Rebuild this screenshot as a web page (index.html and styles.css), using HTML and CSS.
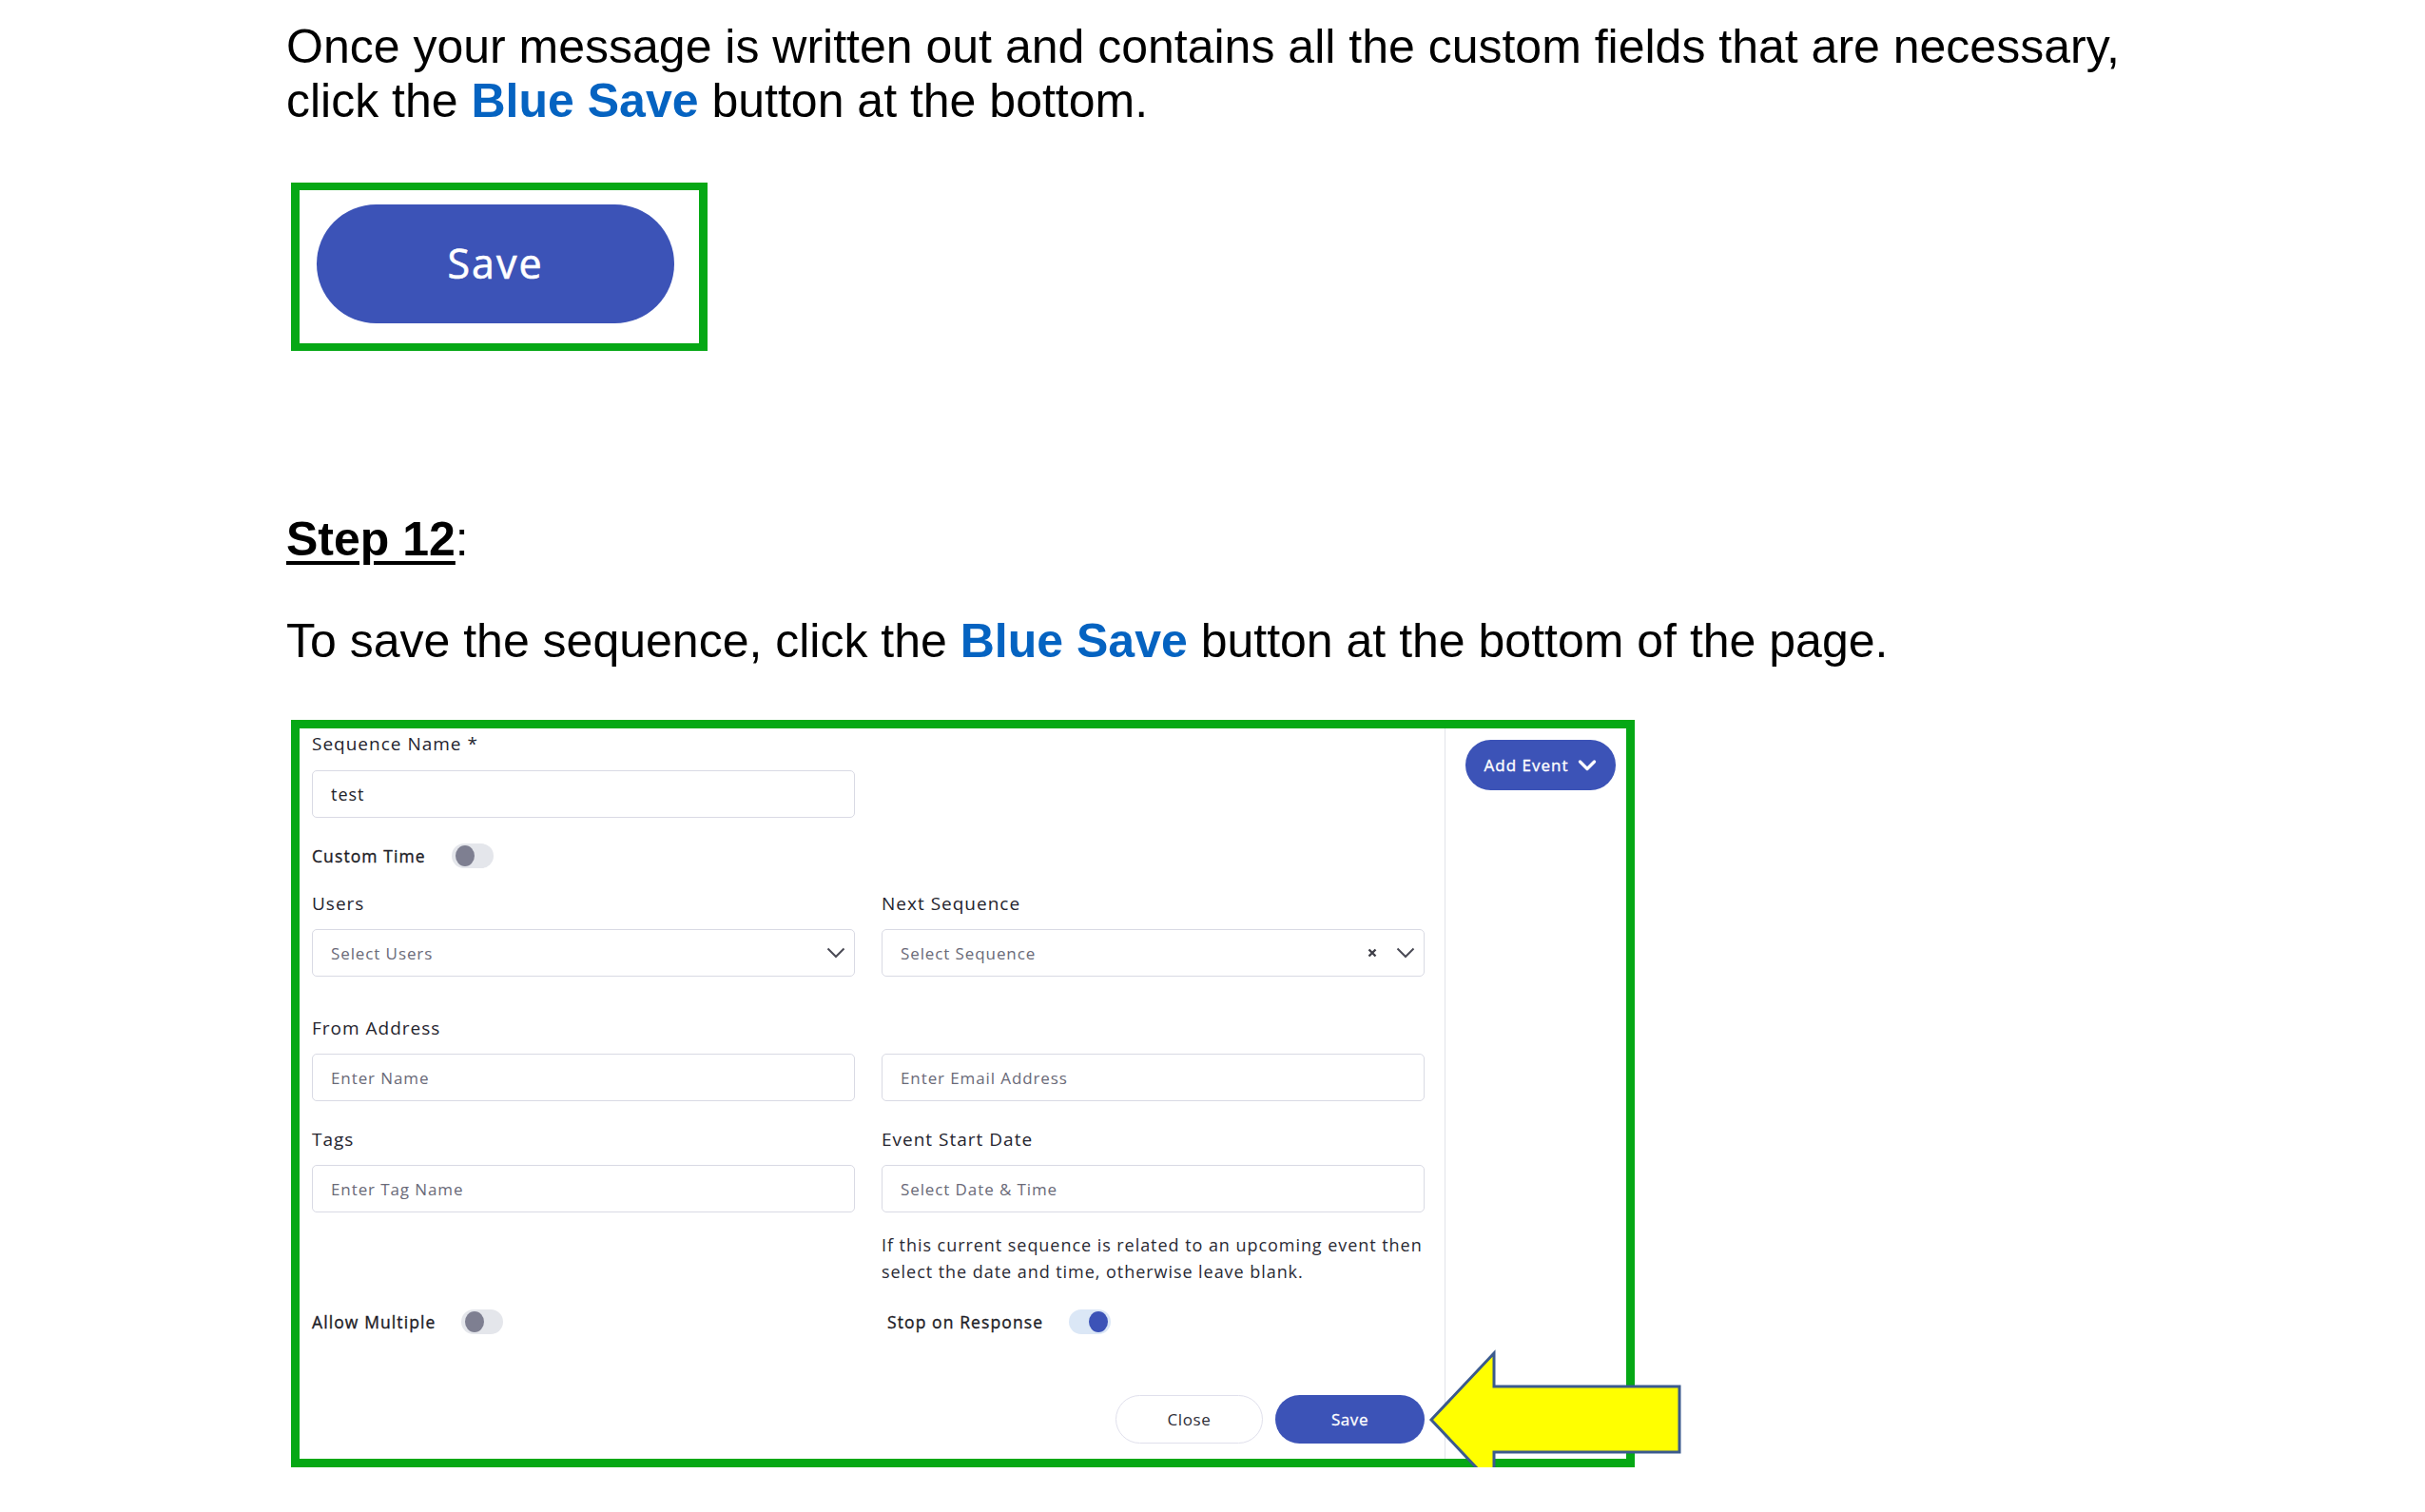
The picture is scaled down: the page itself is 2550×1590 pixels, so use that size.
FILE: index.html
```html
<!DOCTYPE html>
<html lang="en">
<head>
<meta charset="utf-8">
<title>Step 12</title>
<link rel="stylesheet" href="styles.css">
</head>
<body>
<main class="doc">
  <p class="para para-first">Once your message is written out and contains all the custom fields that are necessary,<br>click the <b class="hl">Blue Save</b> button at the bottom.</p>

  <div class="frame frame-save"><div class="big-save">Save</div></div>

  <p class="para step"><span class="step-title">Step 12</span>:</p>

  <p class="para para-save">To save the sequence, click the <b class="hl">Blue Save</b> button at the bottom of the page.</p>

  <div class="frame panel">
    <div class="form">
      <div class="label">Sequence Name *</div>
      <div class="input input-name"><span class="value">test</span></div>

      <div class="switch-row custom-time">
        <span class="switch-label">Custom Time</span>
        <span class="toggle"><span class="knob"></span></span>
      </div>

      <div class="grid g-users">
        <div class="label">Users</div>
        <div class="label">Next Sequence</div>
        <div class="input select select-users">
          <span class="ph">Select Users</span>
          <svg class="chev" width="20" height="12" viewBox="0 0 20 12"><path d="M1.5 1.5 L10 10 L18.5 1.5" fill="none" stroke="#4a4a55" stroke-width="2"/></svg>
        </div>
        <div class="input select select-seq">
          <span class="ph">Select Sequence</span>
          <span class="sel-icons">
            <svg class="clear" width="10" height="10" viewBox="0 0 10 10"><path d="M1.5 1.5 L8.5 8.5 M8.5 1.5 L1.5 8.5" fill="none" stroke="#3f3f48" stroke-width="2.4"/></svg>
            <svg class="chev" width="20" height="12" viewBox="0 0 20 12"><path d="M1.5 1.5 L10 10 L18.5 1.5" fill="none" stroke="#4a4a55" stroke-width="2"/></svg>
          </span>
        </div>
      </div>

      <div class="grid g-from">
        <div class="label">From Address</div>
        <div></div>
        <div class="input"><span class="ph">Enter Name</span></div>
        <div class="input"><span class="ph">Enter Email Address</span></div>
      </div>

      <div class="grid g-tags">
        <div class="label">Tags</div>
        <div class="label">Event Start Date</div>
        <div class="input"><span class="ph">Enter Tag Name</span></div>
        <div class="input"><span class="ph">Select Date &amp; Time</span></div>
        <div></div>
        <p class="help">If this current sequence is related to an upcoming event then<br>select the date and time, otherwise leave blank.</p>
      </div>

      <div class="grid g-switches">
        <div class="switch-row">
          <span class="switch-label">Allow Multiple</span>
          <span class="toggle"><span class="knob"></span></span>
        </div>
        <div class="switch-row stop">
          <span class="switch-label">Stop on Response</span>
          <span class="toggle on"><span class="knob"></span></span>
        </div>
      </div>

      <div class="actions">
        <button class="btn btn-close" type="button">Close</button>
        <button class="btn btn-save" type="button">Save</button>
      </div>
    </div>

    <div class="side">
      <button class="add-event" type="button">Add Event
        <svg width="20" height="12" viewBox="0 0 20 12"><path d="M2.5 2 L10 9.5 L17.5 2" fill="none" stroke="#ffffff" stroke-width="3.2" stroke-linecap="round" stroke-linejoin="round"/></svg>
      </button>
    </div>

    <svg class="arrow" width="272" height="150" viewBox="0 0 272 150">
      <polygon points="5,75 71,5 71,40 266,40 266,109 71,109 71,145" fill="#ffff00" stroke="#3b5a8e" stroke-width="3" stroke-linejoin="miter"/>
    </svg>
  </div>
</main>
</body>
</html>
```

FILE: styles.css
```css
html, body {
  margin: 0;
  padding: 0;
  background: #ffffff;
}

body {
  font-family: "Liberation Sans", Arial, sans-serif;
  color: #000000;
}

.doc {
  padding: 21px 0 0 301px;
}

.para {
  margin: 0;
  font-size: 50px;
  line-height: 57px;
}

.hl {
  color: #0563c1;
  font-weight: bold;
}

.frame {
  border: 9px solid #06a815;
  box-sizing: border-box;
  margin-left: 5px;
}

.frame-save {
  margin-top: 57px;
  width: 438px;
  height: 177px;
  border-width: 8px 9px;
  padding: 15px 0 0 18px;
}

.big-save {
  width: 376px;
  height: 125px;
  border-radius: 63px;
  background: #3c53b7;
  color: #ffffff;
  font-family: "Open Sans", "Noto Sans", sans-serif;
  font-size: 43px;
  letter-spacing: 2px;
  -webkit-text-stroke: 0.6px #ffffff;
  display: flex;
  align-items: center;
  justify-content: center;
  padding-bottom: 2px;
  box-sizing: border-box;
}

.step {
  margin-top: 170px;
}

.step-title {
  font-weight: bold;
  text-decoration: underline;
  text-decoration-thickness: 4px;
  text-underline-offset: 6px;
}

.para-save {
  margin-top: 50px;
}

/* ---------- panel (form screenshot) ---------- */

.panel {
  margin-top: 54px;
  width: 1413px;
  display: flex;
  position: relative;
  font-family: "Open Sans", "Noto Sans", sans-serif;
  color: #22222c;
}

.form {
  flex: 0 0 1204px;
  box-sizing: border-box;
  padding: 4px 21px 16px 13px;
}

.label {
  font-size: 19px;
  line-height: 24px;
  letter-spacing: 1px;
  color: #24242e;
}

.input {
  height: 50px;
  box-sizing: border-box;
  border: 1.5px solid #d9dae4;
  border-radius: 5px;
  padding: 0 9px 0 19px;
  display: flex;
  align-items: center;
  justify-content: space-between;
}

.input-name {
  width: 571px;
  margin-top: 16px;
}

.value {
  font-size: 18px;
  letter-spacing: 1px;
  color: #22222a;
}

.ph {
  font-size: 17px;
  letter-spacing: 0.9px;
  color: #6a6a78;
}

.sel-icons {
  display: flex;
  align-items: center;
  gap: 20px;
}

.switch-row {
  display: flex;
  align-items: center;
  gap: 27px;
  height: 26px;
}

.custom-time {
  margin-top: 27px;
}

.switch-label {
  font-size: 17.5px;
  letter-spacing: 1.1px;
  color: #1c1c26;
  -webkit-text-stroke: 0.35px #1c1c26;
}

.toggle {
  width: 44px;
  height: 26px;
  border-radius: 13px;
  background: #e4e6eb;
  position: relative;
  flex: none;
}

.knob {
  position: absolute;
  left: 4px;
  top: 2px;
  width: 20px;
  height: 22px;
  border-radius: 50%;
  background: #7e7f91;
}

.toggle.on {
  background: #dbe7f6;
}

.toggle.on .knob {
  left: 21px;
  background: #3c53b7;
}

.grid {
  display: grid;
  grid-template-columns: 571px 571px;
  column-gap: 28px;
  row-gap: 15px;
}

.g-users {
  margin-top: 25px;
}

.g-from {
  margin-top: 42px;
}

.g-tags {
  margin-top: 28px;
}

.help {
  margin: 5px 0 0 0;
  font-size: 18px;
  line-height: 28px;
  letter-spacing: 0.95px;
  color: #2a2a34;
  white-space: nowrap;
}

.g-switches {
  margin-top: 26px;
}

.stop {
  padding-left: 6px;
}

.actions {
  margin-top: 64px;
  display: flex;
  justify-content: flex-end;
  gap: 13px;
}

.btn {
  height: 51px;
  border-radius: 26px;
  font-family: "Open Sans", "Noto Sans", sans-serif;
  font-size: 17px;
  letter-spacing: 0.6px;
  cursor: pointer;
}

.btn-close {
  width: 155px;
  background: #ffffff;
  border: 1.5px solid #e0e0ec;
  color: #2e2e38;
}

.btn-save {
  width: 157px;
  background: #3c53b7;
  border: none;
  color: #ffffff;
  -webkit-text-stroke: 0.3px #ffffff;
}

.side {
  flex: 1;
  border-left: 1px solid #e2e3ea;
  padding: 12px 0 0 21px;
}

.add-event {
  width: 158px;
  height: 53px;
  border: none;
  border-radius: 27px;
  background: #3c53b7;
  color: #ffffff;
  font-family: "Open Sans", "Noto Sans", sans-serif;
  font-size: 17px;
  letter-spacing: 1px;
  -webkit-text-stroke: 0.35px #ffffff;
  display: flex;
  align-items: center;
  justify-content: center;
  gap: 10px;
  padding: 0;
}

.arrow {
  position: absolute;
  left: 1185px;
  top: 652px;
  overflow: visible;
}
```
